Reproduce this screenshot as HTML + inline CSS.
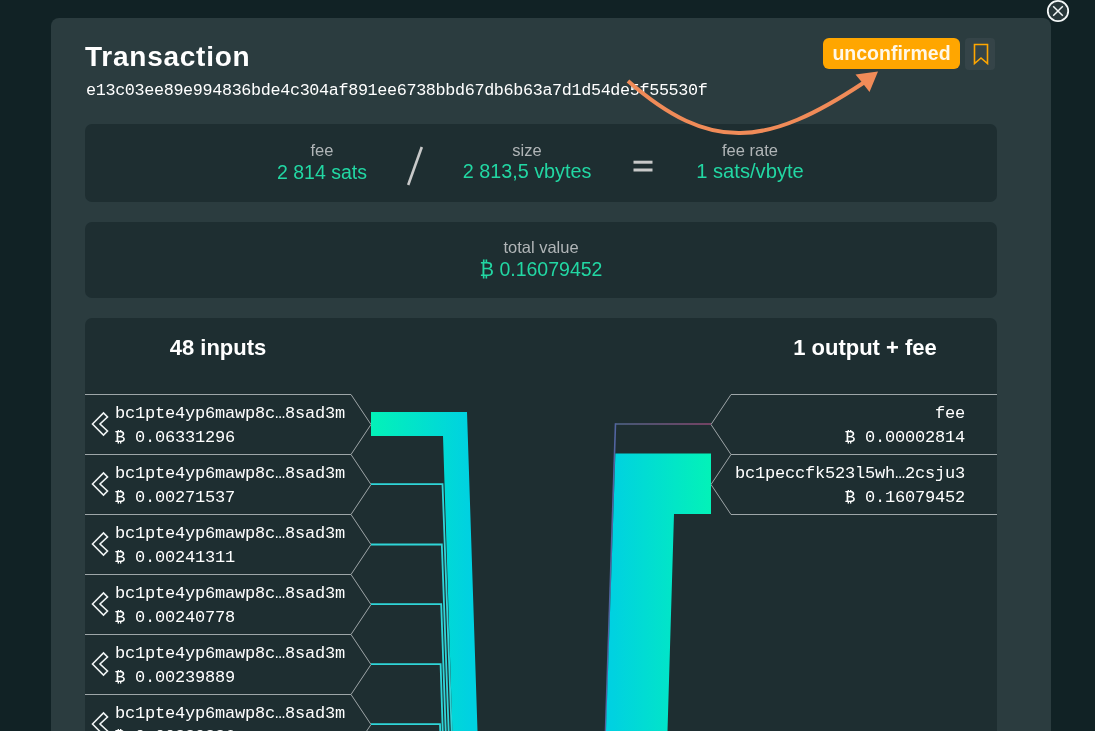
<!DOCTYPE html>
<html>
<head>
<meta charset="utf-8">
<style>
html,body{margin:0;padding:0;}
body{width:1095px;height:731px;overflow:hidden;position:relative;background:#112225;font-family:"Liberation Sans",sans-serif;}
.abs{position:absolute;white-space:nowrap;will-change:transform;}
#panel{position:absolute;left:51px;top:18px;width:1000px;height:760px;background:#2b3c3f;border-radius:8px;}
.box{position:absolute;left:85px;width:912px;background:#1e2e31;border-radius:7px;}
.title{left:85px;top:40px;font-size:28px;line-height:34px;letter-spacing:0.75px;font-weight:bold;color:#fff;}
.hash{left:85.5px;top:80.5px;font-family:"Liberation Mono",monospace;font-size:16.8px;letter-spacing:-0.36px;line-height:20px;color:#fff;}
.badge{left:823px;top:38px;width:137px;height:31px;background:#ffa600;border-radius:6px;color:#fff7e8;font-weight:bold;font-size:19.5px;line-height:31px;text-align:center;}
.bm{left:965px;top:38px;width:30px;height:32px;background:#354448;border-radius:4px;}
.lbl{font-size:16.5px;line-height:20px;color:#b0b5b7;text-align:center;}
.val{font-size:19.5px;line-height:24px;color:#22d7a3;text-align:center;}
.hdr{font-size:22px;line-height:26px;font-weight:bold;color:#fff;}
.mono{font-family:"Liberation Mono",monospace;font-size:17px;letter-spacing:-0.2px;line-height:24px;color:#fff;}
</style>
</head>
<body>
<div id="panel"></div>

<!-- close button -->
<svg class="abs" style="left:1045px;top:-2px" width="26" height="26" viewBox="0 0 26 26">
  <circle cx="13" cy="13" r="10.2" fill="#28373a" stroke="#f4f8f8" stroke-width="1.8"/>
  <path d="M8.2 8.2 L17.8 17.8 M17.8 8.2 L8.2 17.8" stroke="#f4f8f8" stroke-width="1.5"/>
</svg>

<div class="abs title">Transaction</div>
<div class="abs hash">e13c03ee89e994836bde4c304af891ee6738bbd67db6b63a7d1d54de5f55530f</div>

<div class="abs badge">unconfirmed</div>
<div class="abs bm"></div>
<svg class="abs" style="left:965px;top:38px" width="31" height="32" viewBox="0 0 31 32">
  <path d="M9.5 6.5 H22.5 V25.5 L16 20 L9.5 25.5 Z" fill="none" stroke="#ffa600" stroke-width="1.6" stroke-linejoin="miter"/>
</svg>

<!-- fee box -->
<div class="box" style="top:124px;height:78px;"></div>
<div class="abs lbl" style="left:272px;width:100px;top:139.5px;">fee</div>
<div class="abs val" style="left:252px;width:140px;top:159.5px;">2 814 sats</div>
<svg class="abs" style="left:400px;top:140px" width="30" height="50"><path d="M8.2 45 L21.8 7" stroke="#c8c9c9" stroke-width="2.6"/></svg>
<div class="abs lbl" style="left:477px;width:100px;top:139.5px;">size</div>
<div class="abs val" style="left:447px;width:160px;top:159.3px;font-size:19.8px;">2 813,5 vbytes</div>
<svg class="abs" style="left:630px;top:157px" width="26" height="20"><rect x="3.5" y="3.7" width="19" height="3" fill="#c8c9c9"/><rect x="3.5" y="11.5" width="19" height="3" fill="#c8c9c9"/></svg>
<div class="abs lbl" style="left:700px;width:100px;top:139.5px;">fee rate</div>
<div class="abs val" style="left:670px;width:160px;top:159px;font-size:20.2px;">1 sats/vbyte</div>

<!-- total value -->
<div class="box" style="top:222px;height:76px;"></div>
<div class="abs lbl" style="left:441px;width:200px;top:237px;">total value</div>
<div class="abs val" style="left:441px;width:200px;top:257px;">&#x20bf; 0.16079452</div>

<!-- flow box -->
<div class="box" style="top:318px;height:460px;"></div>
<div class="abs hdr" style="left:118px;width:200px;text-align:center;top:335px;">48 inputs</div>
<div class="abs hdr" style="left:765px;width:200px;text-align:center;top:335px;">1 output + fee</div>

<svg class="abs" style="left:0;top:0" width="1095" height="731" viewBox="0 0 1095 731">
  <defs>
    <linearGradient id="gIn" gradientUnits="userSpaceOnUse" x1="371" y1="0" x2="470" y2="0">
      <stop offset="0" stop-color="#03f2b8"/>
      <stop offset="1" stop-color="#00d1e1"/>
    </linearGradient>
    <linearGradient id="gOut" gradientUnits="userSpaceOnUse" x1="611" y1="0" x2="711" y2="0">
      <stop offset="0" stop-color="#00d1e1"/>
      <stop offset="1" stop-color="#03f2b8"/>
    </linearGradient>
    <linearGradient id="gFee" gradientUnits="userSpaceOnUse" x1="615" y1="0" x2="711" y2="0">
      <stop offset="0" stop-color="#52688e"/>
      <stop offset="1" stop-color="#904a74"/>
    </linearGradient>
  </defs>
  <!-- row outlines inputs -->
  <g fill="none" stroke="#9ea6a8" stroke-width="1">
    <path d="M85 394.5 H351 L371 424.5 L351 454.5 H85 M351 454.5 L371 484.5 L351 514.5 H85 M351 514.5 L371 544.5 L351 574.5 H85 M351 574.5 L371 604.5 L351 634.5 H85 M351 634.5 L371 664.5 L351 694.5 H85 M351 694.5 L371 724.5 L351 754.5"/>
    <path d="M997 394.5 H731 L711 424.5 L731 454.5 H997 M731 454.5 L711 484.5 L731 514.5 H997"/>
  </g>
  <!-- input flows -->
  <path d="M371 412 H467 L477.5 731 H452.4 L443 436 H371 Z" fill="url(#gIn)"/>
  <g fill="none" stroke="#2fd5d8" stroke-width="1.8">
    <path d="M371 484.2 H442.5 L452 740"/>
    <path d="M371 544.5 H441.8 L449 740"/>
    <path d="M371 604.2 H441.2 L446 740"/>
    <path d="M371 664.2 H440.6 L443 740"/>
    <path d="M371 724.2 H440 L440.6 740"/>
  </g>
  <!-- output flows -->
  <path d="M615.5 424 H711" stroke="url(#gFee)" stroke-width="1.5" fill="none"/>
  <path d="M615.5 423.3 L605.2 740" stroke="#5264a0" stroke-width="1.6" fill="none"/>
  <path d="M615.4 453.5 H711 V514 H674 L667.5 731 H606 Z" fill="url(#gOut)"/>
  <!-- arrow -->
  <path d="M628 81 C710.5 153 766.2 147.4 864 82.5" fill="none" stroke="#f08b58" stroke-width="4"/>
  <path d="M878 71.5 L855.5 74.5 L862.5 83 L869.5 92 Z" fill="#f08b58"/>
</svg>

<!-- input rows -->
<svg class="abs" style="left:85px;top:394px" width="30" height="60" viewBox="0 0 30 60"><path d="M7.5 30 L18.5 19 L22.5 23 L15 30 L22.5 37 L18.5 41 Z" fill="none" stroke="#f0f4f4" stroke-width="1.6" stroke-linejoin="miter"/></svg>
<div class="abs mono" style="left:115px;top:402.0px;">bc1pte4yp6mawp8c…8sad3m</div>
<div class="abs mono" style="left:115px;top:426.0px;">₿ 0.06331296</div>
<svg class="abs" style="left:85px;top:454px" width="30" height="60" viewBox="0 0 30 60"><path d="M7.5 30 L18.5 19 L22.5 23 L15 30 L22.5 37 L18.5 41 Z" fill="none" stroke="#f0f4f4" stroke-width="1.6" stroke-linejoin="miter"/></svg>
<div class="abs mono" style="left:115px;top:462.0px;">bc1pte4yp6mawp8c…8sad3m</div>
<div class="abs mono" style="left:115px;top:486.0px;">₿ 0.00271537</div>
<svg class="abs" style="left:85px;top:514px" width="30" height="60" viewBox="0 0 30 60"><path d="M7.5 30 L18.5 19 L22.5 23 L15 30 L22.5 37 L18.5 41 Z" fill="none" stroke="#f0f4f4" stroke-width="1.6" stroke-linejoin="miter"/></svg>
<div class="abs mono" style="left:115px;top:522.0px;">bc1pte4yp6mawp8c…8sad3m</div>
<div class="abs mono" style="left:115px;top:546.0px;">₿ 0.00241311</div>
<svg class="abs" style="left:85px;top:574px" width="30" height="60" viewBox="0 0 30 60"><path d="M7.5 30 L18.5 19 L22.5 23 L15 30 L22.5 37 L18.5 41 Z" fill="none" stroke="#f0f4f4" stroke-width="1.6" stroke-linejoin="miter"/></svg>
<div class="abs mono" style="left:115px;top:582.0px;">bc1pte4yp6mawp8c…8sad3m</div>
<div class="abs mono" style="left:115px;top:606.0px;">₿ 0.00240778</div>
<svg class="abs" style="left:85px;top:634px" width="30" height="60" viewBox="0 0 30 60"><path d="M7.5 30 L18.5 19 L22.5 23 L15 30 L22.5 37 L18.5 41 Z" fill="none" stroke="#f0f4f4" stroke-width="1.6" stroke-linejoin="miter"/></svg>
<div class="abs mono" style="left:115px;top:642.0px;">bc1pte4yp6mawp8c…8sad3m</div>
<div class="abs mono" style="left:115px;top:666.0px;">₿ 0.00239889</div>
<svg class="abs" style="left:85px;top:694px" width="30" height="60" viewBox="0 0 30 60"><path d="M7.5 30 L18.5 19 L22.5 23 L15 30 L22.5 37 L18.5 41 Z" fill="none" stroke="#f0f4f4" stroke-width="1.6" stroke-linejoin="miter"/></svg>
<div class="abs mono" style="left:115px;top:702.0px;">bc1pte4yp6mawp8c…8sad3m</div>
<div class="abs mono" style="left:115px;top:724.8px;">₿ 0.00239336</div>
<div class="abs mono" style="right:129.5px;top:402.0px;">fee</div>
<div class="abs mono" style="right:129.5px;top:426.0px;">₿ 0.00002814</div>
<div class="abs mono" style="right:129.5px;top:462.0px;">bc1peccfk523l5wh…2csju3</div>
<div class="abs mono" style="right:129.5px;top:486.0px;">₿ 0.16079452</div>
</body>
</html>
